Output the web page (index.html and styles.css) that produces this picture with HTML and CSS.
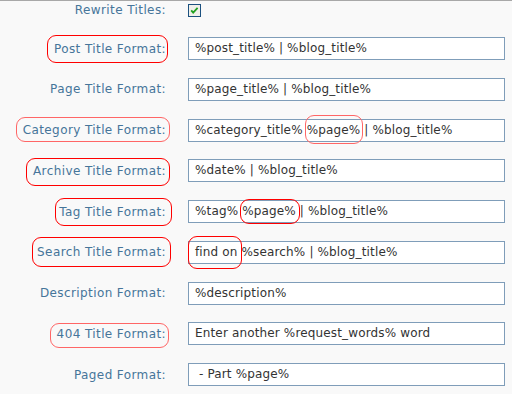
FILE: index.html
```html
<!DOCTYPE html>
<html>
<head>
<meta charset="utf-8">
<link rel="stylesheet" href="styles.css">
</head>
<body>
<div class="form">
  <div class="row row-check">
    <div class="label">Rewrite Titles:</div>
    <div class="field">
      <span class="checkbox">
        <svg width="13" height="13" viewBox="0 0 13 13">
          <rect x="0.5" y="0.5" width="12" height="12" fill="#f0f0ea" stroke="#1c5180"/>
          <path d="M3.2 6.3 L5.2 8.6 L9.6 3.8" fill="none" stroke="#21a121" stroke-width="1.8"/>
        </svg>
      </span>
    </div>
  </div>
  <div class="row">
    <div class="label"><span class="mark m-post">Post Title Format:</span></div>
    <div class="field"><div class="input">%post_title% | %blog_title%</div></div>
  </div>
  <div class="row">
    <div class="label">Page Title Format:</div>
    <div class="field"><div class="input">%page_title% | %blog_title%</div></div>
  </div>
  <div class="row">
    <div class="label"><span class="mark soft m-cat">Category Title Format:</span></div>
    <div class="field"><div class="input">%category_title% <span class="mark soft i-cat">%page%</span> | %blog_title%</div></div>
  </div>
  <div class="row">
    <div class="label"><span class="mark m-arch">Archive Title Format:</span></div>
    <div class="field"><div class="input">%date% | %blog_title%</div></div>
  </div>
  <div class="row">
    <div class="label"><span class="mark m-tag">Tag Title Format:</span></div>
    <div class="field"><div class="input">%tag% <span class="mark i-tag">%page%</span> | %blog_title%</div></div>
  </div>
  <div class="row">
    <div class="label"><span class="mark m-search">Search Title Format:</span></div>
    <div class="field"><div class="input"><span class="mark i-search">find on</span> %search% | %blog_title%</div></div>
  </div>
  <div class="row">
    <div class="label">Description Format:</div>
    <div class="field"><div class="input">%description%</div></div>
  </div>
  <div class="row">
    <div class="label"><span class="mark soft m-404">404 Title Format:</span></div>
    <div class="field"><div class="input">Enter another %request_words% word</div></div>
  </div>
  <div class="row">
    <div class="label">Paged Format:</div>
    <div class="field"><div class="input"> - Part %page%</div></div>
  </div>
</div>
</body>
</html>
```

FILE: styles.css
```css
html, body {
  margin: 0;
  padding: 0;
  background: #f9f9f9;
}
body {
  border-top: 1px solid #a8a8a8;
  height: 393px;
  overflow: hidden;
  font-family: "DejaVu Sans", Verdana, sans-serif;
}
.form {
  display: flex;
  flex-direction: column;
  gap: 17.75px;
  padding-top: 2px;
}
.row {
  display: grid;
  grid-template-columns: 166px 317px;
  column-gap: 22px;
  align-items: center;
  height: 23px;
}
.row-check {
  height: 13px;
  margin-bottom: 3.25px;
}
.label {
  text-align: right;
  font-size: 12px;
  line-height: 14px;
  letter-spacing: 0.4px;
  color: #46759a;
  white-space: nowrap;
}
.field {
  display: flex;
  align-items: center;
}
.checkbox {
  display: block;
  width: 13px;
  height: 13px;
}
.checkbox svg {
  display: block;
}
.input {
  box-sizing: border-box;
  width: 317px;
  height: 23px;
  border: 1px solid #7f9db9;
  background: #fff;
  padding: 0 6px;
  font-size: 12px;
  line-height: 21px;
  letter-spacing: 0.15px;
  color: #333;
  white-space: pre;
}
.mark {
  position: relative;
  display: inline-block;
  line-height: 14px;
}
.mark::after {
  content: "";
  position: absolute;
  border: 1px solid #f00;
  border-radius: 9px;
}
.mark.soft::after {
  border-color: #f66;
}
.m-post::after { top: -7px; bottom: -7px; left: -7px; right: -2px; }
.m-cat::after { top: -6px; bottom: -5px; left: -7px; right: -4px; }
.m-arch::after { top: -6px; bottom: -8px; left: -7px; right: -4px; }
.m-tag::after { top: -7px; bottom: -7px; left: -4px; right: -6px; }
.m-search::after { top: -8px; bottom: -8px; left: -5px; right: -5px; }
.m-404::after { top: -4px; bottom: -7px; left: -7px; right: -3px; }
.i-cat::after { top: -8px; bottom: -7px; left: -2px; right: -3px; }
.i-tag::after { top: -5px; bottom: -6px; left: -2px; right: -4px; }
.i-search::after { top: -9px; bottom: -10px; left: -7px; right: -4px; }
```
